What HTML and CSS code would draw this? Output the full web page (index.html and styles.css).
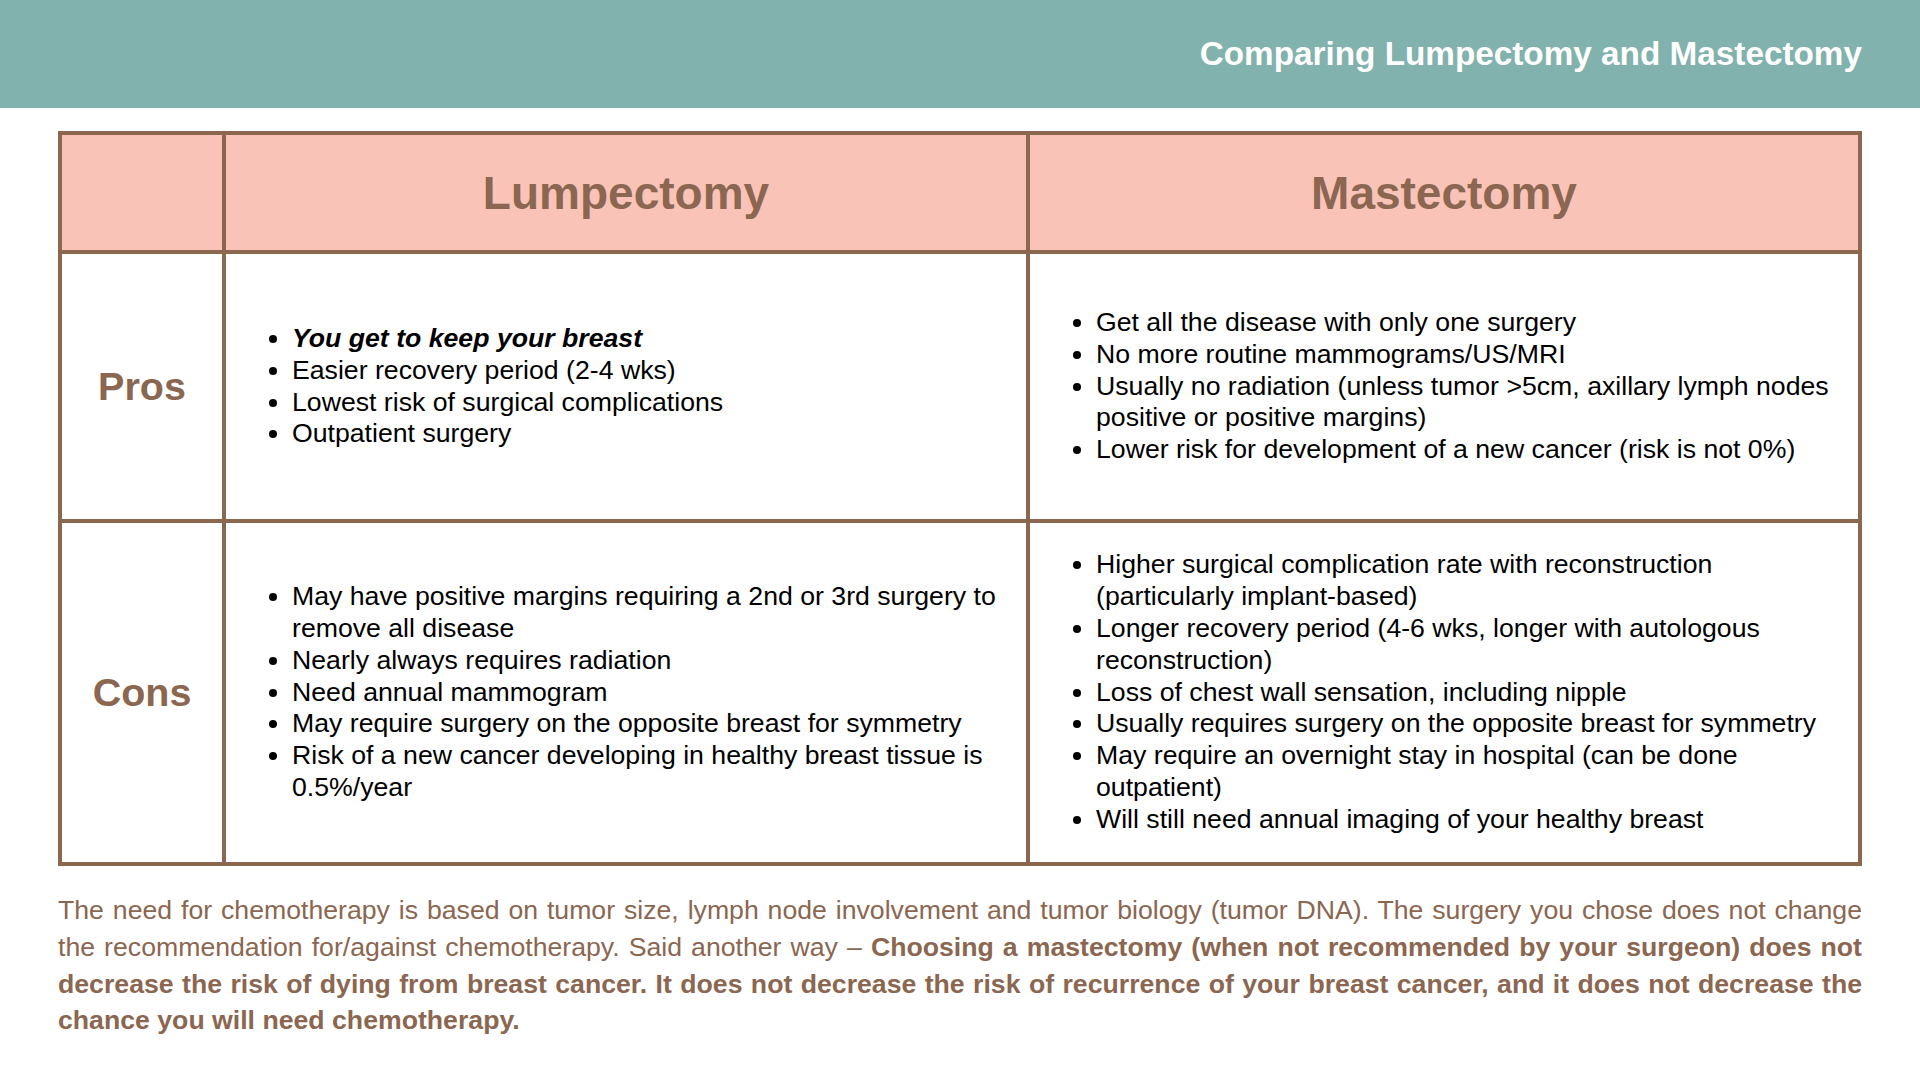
FILE: index.html
```html
<!DOCTYPE html>
<html lang="en">
<head>
<meta charset="utf-8">
<title>Comparing Lumpectomy and Mastectomy</title>
<link rel="stylesheet" href="styles.css">
</head>
<body>
<header class="topbar">
  <h1 class="title">Comparing Lumpectomy and Mastectomy</h1>
</header>
<main class="content">
  <div class="grid">
    <div class="cell head"></div>
    <div class="cell head colhead">Lumpectomy</div>
    <div class="cell head colhead">Mastectomy</div>

    <div class="cell label">Pros</div>
    <div class="cell body">
      <ul class="list">
        <li><strong><em>You get to keep your breast</em></strong></li>
        <li>Easier recovery period (2-4 wks)</li>
        <li>Lowest risk of surgical complications</li>
        <li>Outpatient surgery</li>
      </ul>
    </div>
    <div class="cell body">
      <ul class="list">
        <li>Get all the disease with only one surgery</li>
        <li>No more routine mammograms/US/MRI</li>
        <li>Usually no radiation (unless tumor &gt;5cm, axillary lymph nodes positive or positive margins)</li>
        <li>Lower risk for development of a new cancer (risk is not 0%)</li>
      </ul>
    </div>

    <div class="cell label">Cons</div>
    <div class="cell body">
      <ul class="list">
        <li>May have positive margins requiring a 2nd or 3rd surgery to remove all disease</li>
        <li>Nearly always requires radiation</li>
        <li>Need annual mammogram</li>
        <li>May require surgery on the opposite breast for symmetry</li>
        <li>Risk of a new cancer developing in healthy breast tissue is 0.5%/year</li>
      </ul>
    </div>
    <div class="cell body">
      <ul class="list">
        <li>Higher surgical complication rate with reconstruction (particularly implant-based)</li>
        <li>Longer recovery period (4-6 wks, longer with autologous reconstruction)</li>
        <li>Loss of chest wall sensation, including nipple</li>
        <li>Usually requires surgery on the opposite breast for symmetry</li>
        <li>May require an overnight stay in hospital (can be done outpatient)</li>
        <li>Will still need annual imaging of your healthy breast</li>
      </ul>
    </div>
  </div>

  <p class="note">The need for chemotherapy is based on tumor size, lymph node involvement and tumor biology (tumor DNA). The surgery you chose does not change the recommendation for/against chemotherapy. Said another way – <strong>Choosing a mastectomy (when not recommended by your surgeon) does not decrease the risk of dying from breast cancer. It does not decrease the risk of recurrence of your breast cancer, and it does not decrease the chance you will need chemotherapy.</strong></p>
</main>
</body>
</html>
```

FILE: styles.css
```css
* {
  box-sizing: border-box;
}

html, body {
  margin: 0;
  padding: 0;
  background: #ffffff;
}

body {
  font-family: "Liberation Sans", Arial, sans-serif;
  width: 1920px;
  height: 1080px;
  overflow: hidden;
}

.topbar {
  height: 108px;
  background: #82b2ad;
  display: flex;
  align-items: center;
  justify-content: flex-end;
  padding-right: 58px;
}

.title {
  margin: 0;
  color: #ffffff;
  font-size: 33.3px;
  font-weight: 700;
  line-height: 1;
}

.content {
  padding: 23px 58px 0 58px;
}

.grid {
  display: grid;
  grid-template-columns: 160px 800px 828px;
  grid-template-rows: 115px 265px 339px;
  gap: 4px;
  padding: 4px;
  background: #8c674f;
  width: 1804px;
}

.cell {
  background: #ffffff;
  display: flex;
  align-items: center;
}

.head {
  background: #fac3b7;
}

.colhead {
  justify-content: center;
  color: #8b6650;
  font-size: 46px;
  font-weight: 700;
}

.label {
  justify-content: center;
  color: #8b6650;
  font-size: 39.5px;
  font-weight: 700;
}

.body {
  padding: 0 16px 0 26px;
}

.list {
  margin: 0;
  padding-left: 40px;
  color: #000000;
  font-size: 26.67px;
  line-height: 31.9px;
}

.note {
  margin: 26px 0 0 0;
  color: #8b6650;
  font-size: 26.67px;
  line-height: 36.8px;
  text-align: justify;
}

.note strong {
  font-weight: 700;
}
```
